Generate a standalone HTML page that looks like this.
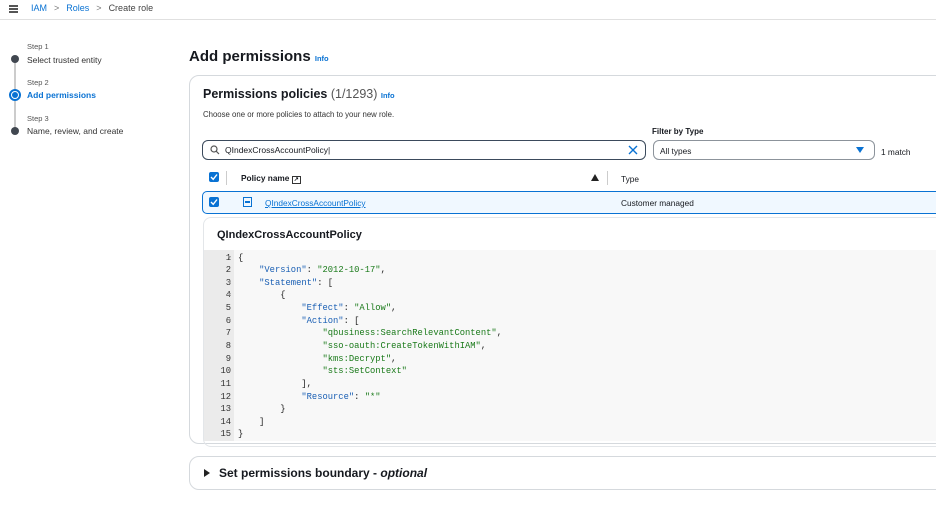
<!DOCTYPE html><html><head><style>
*{box-sizing:border-box;margin:0;padding:0}
body{width:936px;height:512px;overflow:hidden;background:#fff;font-family:"Liberation Sans",Arial,sans-serif;color:#16191f;position:relative}
.a{position:absolute}
.link{color:#0972d3}
.mono{font-family:"Liberation Mono",monospace;font-size:8.8px;white-space:pre}
</style></head><body>
<div class="a" style="left:0;top:0;width:936px;height:20px;border-bottom:1px solid #e0e0e0"></div>
<div class="a" style="left:9px;top:5px;width:9px;height:2px;background:#555;box-shadow:0 3px 0 #555,0 6px 0 #555"></div>
<div class="a" style="left:31px;top:3px;font-size:9px"><span class="link">IAM</span><span style="color:#777;margin:0 7px">&gt;</span><span class="link">Roles</span><span style="color:#777;margin:0 7px">&gt;</span><span style="color:#444">Create role</span></div>

<div class="a" style="left:14px;top:60px;width:2px;height:72px;background:#ccc"></div>
<div class="a" style="left:27px;top:42px;font-size:7.5px;color:#555">Step 1</div>
<div class="a" style="left:11px;top:55px;width:8px;height:8px;border-radius:50%;background:#414750"></div>
<div class="a" style="left:27px;top:55px;font-size:8.5px;color:#333">Select trusted entity</div>
<div class="a" style="left:27px;top:78px;font-size:7.5px;color:#555">Step 2</div>
<div class="a" style="left:9px;top:89px;width:12px;height:12px;border-radius:50%;border:2px solid #0972d3;background:#fff"></div>
<div class="a" style="left:12px;top:92px;width:6px;height:6px;border-radius:50%;background:#0972d3"></div>
<div class="a" style="left:27px;top:90px;font-size:8.5px;font-weight:bold;color:#0972d3">Add permissions</div>
<div class="a" style="left:27px;top:114px;font-size:7.5px;color:#555">Step 3</div>
<div class="a" style="left:11px;top:127px;width:8px;height:8px;border-radius:50%;background:#414750"></div>
<div class="a" style="left:27px;top:126px;font-size:8.5px;color:#333">Name, review, and create</div>

<div class="a" style="left:189px;top:48px;font-size:15px;font-weight:bold">Add permissions <span class="link" style="font-size:7.5px">Info</span></div>

<div class="a" style="left:189px;top:75px;width:760px;height:369px;border:1px solid #d5d9dd;border-radius:10px"></div>
<div class="a" style="left:203px;top:87px;font-size:12.5px;font-weight:bold">Permissions policies <span style="font-weight:normal;color:#555">(1/1293)</span> <span class="link" style="font-size:7.5px">Info</span></div>
<div class="a" style="left:203px;top:110px;font-size:7.8px;color:#333">Choose one or more policies to attach to your new role.</div>

<div class="a" style="left:652px;top:127px;font-size:8px;font-weight:bold">Filter by Type</div>
<div class="a" style="left:202px;top:140px;width:444px;height:20px;border:1px solid #3b4a5c;border-radius:6px"></div>
<svg class="a" style="left:210px;top:145px" width="10" height="10"><circle cx="4" cy="4" r="3" fill="none" stroke="#555" stroke-width="1.2"/><path d="M6.3 6.3L9 9" stroke="#555" stroke-width="1.2"/></svg>
<div class="a" style="left:225px;top:145px;font-size:8.5px">QIndexCrossAccountPolicy|</div>
<svg class="a" style="left:628px;top:145px" width="10" height="10"><path d="M1 1L9 9M9 1L1 9" stroke="#0972d3" stroke-width="1.4"/></svg>
<div class="a" style="left:653px;top:140px;width:222px;height:20px;border:1px solid #8c939b;border-radius:6px"></div>
<div class="a" style="left:660px;top:146px;font-size:8.3px">All types</div>
<svg class="a" style="left:856px;top:147px" width="8" height="6"><path d="M0 0H8L4 6Z" fill="#0972d3"/></svg>
<div class="a" style="left:881px;top:147px;font-size:8.3px">1 match</div>

<div class="a" style="left:209px;top:172px;width:10px;height:10px;background:#0972d3;border-radius:2px"></div>
<svg class="a" style="left:209px;top:172px" width="10" height="10"><path d="M2 5L4.2 7.3L8 2.5" stroke="#fff" stroke-width="1.4" fill="none"/></svg>
<div class="a" style="left:226px;top:171px;width:1px;height:14px;background:#ccc"></div>
<div class="a" style="left:241px;top:173px;font-size:8.3px;font-weight:bold">Policy name <span style="border:1px solid #333;font-size:6px;padding:0 1px">↗</span></div>
<svg class="a" style="left:591px;top:174px" width="8" height="7"><path d="M0 7H8L4 0Z" fill="#222"/></svg>
<div class="a" style="left:607px;top:171px;width:1px;height:14px;background:#ccc"></div>
<div class="a" style="left:621px;top:174px;font-size:8.3px">Type</div>

<div class="a" style="left:202px;top:191px;width:750px;height:23px;border:1px solid #0972d3;border-radius:5px;background:#f0f8ff"></div>
<div class="a" style="left:209px;top:197px;width:10px;height:10px;background:#0972d3;border-radius:2px"></div>
<svg class="a" style="left:209px;top:197px" width="10" height="10"><path d="M2 5L4.2 7.3L8 2.5" stroke="#fff" stroke-width="1.4" fill="none"/></svg>
<div class="a" style="left:243px;top:197px;width:9px;height:10px;border:1px solid #0972d3"></div>
<div class="a" style="left:245px;top:201px;width:5px;height:1.5px;background:#0972d3"></div>
<div class="a link" style="left:265px;top:198px;font-size:8.3px;text-decoration:underline">QIndexCrossAccountPolicy</div>
<div class="a" style="left:621px;top:198px;font-size:8.3px">Customer managed</div>

<div class="a" style="left:203px;top:217px;width:750px;height:230px;border:1px solid #e3e6e9;border-radius:8px"></div>
<div class="a" style="left:217px;top:229px;font-size:11px;font-weight:bold">QIndexCrossAccountPolicy</div>
<div class="a" style="left:204px;top:250px;width:740px;height:191px;background:#f8f8f8"></div>
<div class="a" style="left:204px;top:250px;width:30px;height:191px;background:#ebebeb"></div>
<div class="a mono" style="left:204px;top:251.5px;width:27px;text-align:right;line-height:12.64px;color:#333">1
2
3
4
5
6
7
8
9
10
11
12
13
14
15</div>
<div class="a mono" style="left:228px;top:251.5px;line-height:12.64px;color:#999;font-size:6px">▾<br><br>▾<br>▾<br><br>▾</div>
<div class="a mono" style="left:238px;top:251.5px;line-height:12.64px;color:#222">{
    <span style="color:#1a5fb4">"Version"</span>: <span style="color:#1a7a1a">"2012-10-17"</span>,
    <span style="color:#1a5fb4">"Statement"</span>: [
        {
            <span style="color:#1a5fb4">"Effect"</span>: <span style="color:#1a7a1a">"Allow"</span>,
            <span style="color:#1a5fb4">"Action"</span>: [
                <span style="color:#1a7a1a">"qbusiness:SearchRelevantContent"</span>,
                <span style="color:#1a7a1a">"sso-oauth:CreateTokenWithIAM"</span>,
                <span style="color:#1a7a1a">"kms:Decrypt"</span>,
                <span style="color:#1a7a1a">"sts:SetContext"</span>
            ],
            <span style="color:#1a5fb4">"Resource"</span>: <span style="color:#1a7a1a">"*"</span>
        }
    ]
}</div>

<div class="a" style="left:189px;top:456px;width:760px;height:34px;border:1px solid #d5d9dd;border-radius:10px"></div>
<svg class="a" style="left:204px;top:469px" width="6" height="8"><path d="M0 0L6 4L0 8Z" fill="#222"/></svg>
<div class="a" style="left:219px;top:466px;font-size:12px;font-weight:bold">Set permissions boundary - <i>optional</i></div>
</body></html>
